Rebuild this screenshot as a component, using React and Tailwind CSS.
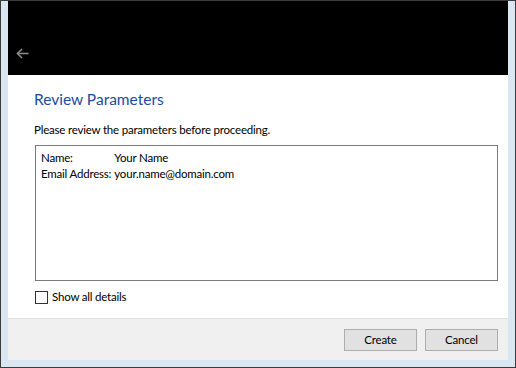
import React, { useState } from 'react';

const App = () => {
  const [showAll, setShowAll] = useState(false);

  return (
    <div className="w-[516px] h-[368px] bg-[#dbe6f3] border border-[#3c3c3c] flex flex-col px-[7px] pb-[7px] font-['Lato',sans-serif] text-[11.5px] tracking-[-0.2px] text-black overflow-hidden">
      {/* Header */}
      <div className="h-[74px] bg-black shrink-0 flex items-end pb-[16px] pl-[8px]">
        <svg width="13" height="11" viewBox="0 0 13 11" fill="none" stroke="#8e8e8e" strokeWidth="1.5">
          <path d="M12.5 5.5H1.5" />
          <path d="M6 1L1.5 5.5 6 10" />
        </svg>
      </div>

      {/* Body */}
      <div className="flex-1 bg-white flex flex-col pl-[27px] pr-[10px] pt-[14px]">
        <div className="text-[15.5px] leading-[20px] tracking-normal text-[#1c4ba0] -ml-px">Review Parameters</div>
        <div className="mt-[13px] leading-[15px] -ml-px">Please review the parameters before proceeding.</div>
        <div className="mt-[8px] h-[136px] border border-[#7a7a7a] px-[5px] pt-[4px] leading-[16px] grid grid-cols-[auto_1fr] content-start gap-x-[3px]">
          <span>Name:</span>
          <span>Your Name</span>
          <span className="whitespace-nowrap">Email Address:</span>
          <span>your.name@domain.com</span>
        </div>
        <label className="mt-[8px] flex items-center gap-[4px] leading-[16px]">
          <span
            onClick={() => setShowAll(!showAll)}
            className="w-[13px] h-[13px] border border-[#333] bg-white flex items-center justify-center"
          >
            {showAll && <span className="w-[7px] h-[7px] bg-[#333]" />}
          </span>
          <span>Show all details</span>
        </label>
      </div>

      {/* Footer */}
      <div className="h-[42px] bg-[#f0f0f0] border-t border-[#dfdfdf] shrink-0 flex items-center justify-end gap-[8px] pr-[10px]">
        <button className="w-[73px] h-[22px] bg-[#e1e1e1] border border-[#adadad] leading-none">Create</button>
        <button className="w-[73px] h-[22px] bg-[#e1e1e1] border border-[#adadad] leading-none">Cancel</button>
      </div>
    </div>
  );
};

export default App;
